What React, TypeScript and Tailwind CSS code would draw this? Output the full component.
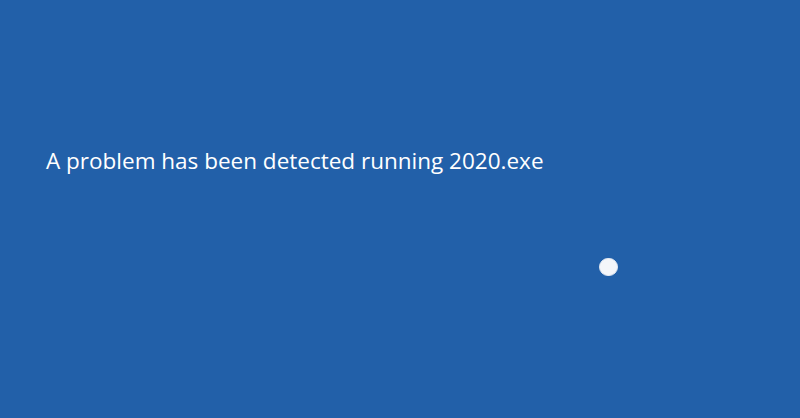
export default function App() {
  return (
    <div className="w-[800px] h-[418px] bg-[#2260a9] flex flex-col overflow-hidden">
      <div className="h-[146px]" />
      <div className="pl-[46px] text-white text-[22.5px] leading-[30px]" style={{ fontFamily: '"Open Sans", "Noto Sans", sans-serif' }}>
        A problem has been detected running 2020.exe
      </div>
      <div className="flex pl-[599px] pt-[82px]">
        <div className="w-[19px] h-[18px] rounded-full bg-[#f4f6fa] border border-[#dfe6f0]" />
      </div>
    </div>
  );
}
